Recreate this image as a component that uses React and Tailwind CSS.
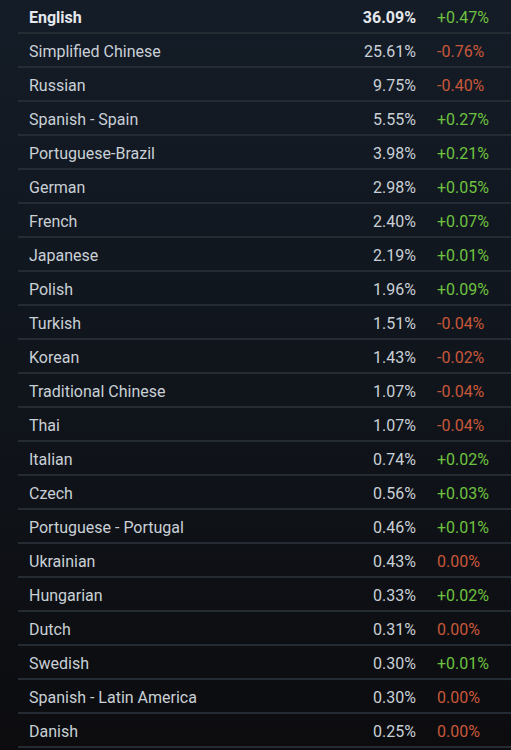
import React from "react";

const rows = [
  ["English", "36.09%", "+0.47%", true],
  ["Simplified Chinese", "25.61%", "-0.76%"],
  ["Russian", "9.75%", "-0.40%"],
  ["Spanish - Spain", "5.55%", "+0.27%"],
  ["Portuguese-Brazil", "3.98%", "+0.21%"],
  ["German", "2.98%", "+0.05%"],
  ["French", "2.40%", "+0.07%"],
  ["Japanese", "2.19%", "+0.01%"],
  ["Polish", "1.96%", "+0.09%"],
  ["Turkish", "1.51%", "-0.04%"],
  ["Korean", "1.43%", "-0.02%"],
  ["Traditional Chinese", "1.07%", "-0.04%"],
  ["Thai", "1.07%", "-0.04%"],
  ["Italian", "0.74%", "+0.02%"],
  ["Czech", "0.56%", "+0.03%"],
  ["Portuguese - Portugal", "0.46%", "+0.01%"],
  ["Ukrainian", "0.43%", "0.00%"],
  ["Hungarian", "0.33%", "+0.02%"],
  ["Dutch", "0.31%", "0.00%"],
  ["Swedish", "0.30%", "+0.01%"],
  ["Spanish - Latin America", "0.30%", "0.00%"],
  ["Danish", "0.25%", "0.00%"],
];

export default function App() {
  return (
    <div
      className="w-[511px] h-[750px] overflow-hidden bg-gradient-to-b from-[#141c27] via-[#10151c] to-[#0c0c0f] pl-[18px] text-[16px] text-[#c9d0d6]"
      style={{ fontFamily: "Roboto, 'Liberation Sans', sans-serif" }}
    >
      {rows.map(([name, pct, chg, bold]) => (
        <div
          key={name}
          className="flex items-center h-[34px] pt-[4px] border-b-2 border-[#242b33] leading-none"
        >
          <div className={`flex-1 pl-[11px] ${bold ? "font-bold text-[#e4e8ec]" : ""}`}>
            {name}
          </div>
          <div className={`w-[90px] text-right ${bold ? "font-bold text-[#e4e8ec]" : ""}`}>
            {pct}
          </div>
          <div
            className={`w-[95px] pl-[21px] ${
              chg.startsWith("+") ? "text-[#6ec23f]" : "text-[#c8583a]"
            }`}
          >
            {chg}
          </div>
        </div>
      ))}
    </div>
  );
}
